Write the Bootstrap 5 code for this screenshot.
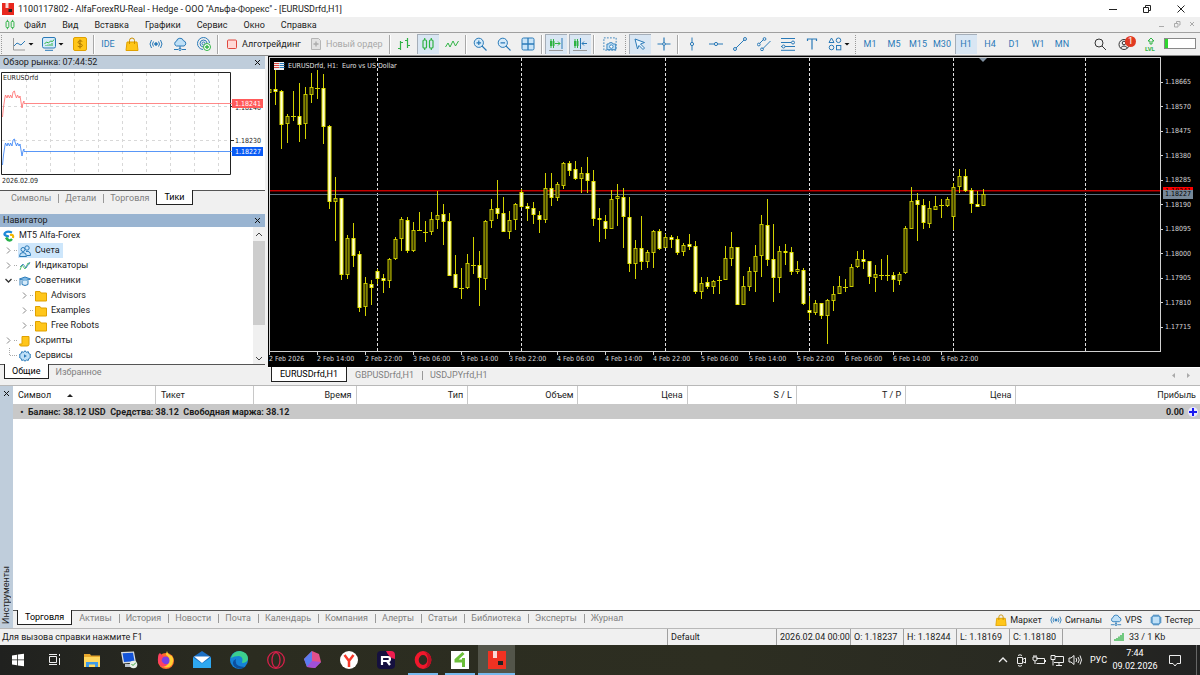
<!DOCTYPE html>
<html lang="ru">
<head>
<meta charset="utf-8">
<meta name="viewport" content="width=device-width, initial-scale=1">
<title>AlfaForexRU-Real - [EURUSDrfd,H1]</title>
<link href="https://cdn.jsdelivr.net/npm/bootstrap@5.3.0/dist/css/bootstrap.min.css" rel="stylesheet">
<script src="https://cdn.jsdelivr.net/npm/bootstrap@5.3.0/dist/js/bootstrap.bundle.min.js"></script>
<style>
  :root { --face:#f0f0f0; --edge:#a0a0a0; --ink:#1c1c1c; --dim:#808080; --blue:#2a7ab8; }
  body { font-family: Roboto, "Noto Sans", sans-serif; font-size: 9px; line-height: 14px; color: var(--ink); background: var(--face); }
  button { font: inherit; color: inherit; background: none; border: 0; padding: 0; }
  a { color: inherit; text-decoration: none; }
  svg { display: block; flex: none; }
  .ic { width: 14px; height: 14px; fill: none; stroke: var(--blue); stroke-width: 1; }
  .tight { font-family: "DejaVu Sans Condensed", sans-serif; font-size: 7px; line-height: 10px; }

  .titlebar { height: 17px; background: #fff; padding: 0 2px; }
  .titlebar .winbtn { width: 34px; height: 17px; }
  .winbtn svg { margin: auto; }
  .menubar { height: 15px; padding-left: 4px; }
  .menubar .menu-list { gap: 16px; padding-left: 8px; }

  .toolbar { height: 24px; border-top: 1px solid var(--edge); border-bottom: 1px solid #8a8a8a; gap: 2px; padding-left: 1px; }
  .tool { width: 22px; height: 20px; display: flex; align-items: center; justify-content: center; flex: none; color: var(--blue); }
  .tool.drop { width: 28px; gap: 2px; }
  .tool.wide { width: 26px; }
  .tool.on { background: #d9e6f3; box-shadow: inset 1px 1px 0 #a5aeb8; }
  .tool.labelled { width: auto; padding: 0 4px; gap: 3px; color: var(--ink); }
  .tool.labelled.algo { width: 84px; }
  .tool.labelled.order { width: 80px; color: #a8a8a8; justify-content: flex-start; padding: 0 2px; }
  .caret { width: 6px; height: 3px; background: #111; clip-path: polygon(0 0,100% 0,50% 100%); flex: none; }
  .sep { width: 2px; height: 19px; border-left: 1px solid #a8a8a8; border-right: 1px solid #fff; flex: none; }
  .grip { width: 2px; height: 19px; border-left: 1px dotted #999; flex: none; }
  .count { top: 2px; right: 0; min-width: 11px; height: 11px; line-height: 11px; border-radius: 6px; background: #e13a22; color: #fff; text-align: center; }

  .side { width: 265px; margin-right: 3px; }
  .panehead { height: 13px; line-height: 13px; padding: 0 4px 0 3px; background: #bfcddb; }
  .panehead.active { background: #99b4d1; }
  .panebody { background: #fff; border-bottom: 1px solid #555; }
  .tickpane { padding: 3px 0; }
  .tickdate { padding: 1px 2px; }
  .tabstrip { height: 15px; color: var(--dim); }
  .tabstrip button { padding: 0 7px; height: 14px; line-height: 13px; position: relative; }
  .tabstrip button + button::before { content: ""; position: absolute; left: 0; top: 3px; height: 9px; border-left: 1px solid #999; }
  .tabstrip .cur { background: #fff; color: #000; border: 1px solid #222; border-top: 0; height: 15px; margin-top: -1px; z-index: 1; line-height: 15px; }
  .tabstrip .cur + button::before, .tabstrip button.cur::before { display: none; }
  .charttabs { border-top: 1px solid #fff; padding-left: 3px; }
  .charttabs button { padding: 0 8px; line-height: 15px; }
  .chartcol { padding-bottom: 3px; }

  .tree { list-style: none; margin: 0; padding: 1px 0 1px 3px; }
  .tree li > div { height: 15px; line-height: 15px; display: flex; align-items: center; gap: 4px; }
  .tree ul { list-style: none; margin: 0; padding: 0 0 0 16px; }
  .tree .ic { width: 12px; height: 12px; }
  .tree .twist { width: 11px; height: 15px; stroke: #888; fill: none; }
  .tree .lab { display: flex; align-items: center; gap: 4px; padding: 0 3px 0 1px; margin-left: 1px; height: 15px; }
  .tree .lab.sel { background: #cde6fb; }
  .tree li > .branch { gap: 0; }
  .tree .dash { width: 3px; border-top: 1px dotted #aaa; }
  .scroller { width: 12px; background: var(--face); }
  .thumb { height: 84px; background: #cdcdcd; }

  .chartframe { background: #000; color: #d8d8d8; padding: 1px 0 0 1px; }
  .plot { border: 1px solid #d0d0d0; overflow: hidden; }
  .prices { width: 39px; padding: 20px 0 20px 0; }
  .prices span { display: flex; align-items: center; height: 10px; gap: 2px; }
  .prices span::before { content: ""; width: 2px; border-top: 1px solid #d0d0d0; }
  .quote { left: 2px; width: 30px; height: 9px; line-height: 9px; padding-left: 2px; color: #000; }
  .times { height: 15px; overflow: hidden; }
  .times span { flex: 0 0 48px; white-space: nowrap; line-height: 14px; position: relative; }
  .times span::before { content: ""; position: absolute; left: 0; top: 0; height: 3px; border-left: 1px solid #d0d0d0; }
  .candles .w { fill: #d2d200; }
  .candles .h { fill: #3a3a00; stroke: #c8c800; }
  .candles .f { fill: #ffffd8; stroke: #e8e800; }

  .toolbox { border-top: 1px solid #b8b8b8; }
  .toolstrip { width: 13px; background: #bfcddb; padding: 4px 0; }
  .upright { writing-mode: vertical-rl; transform: rotate(180deg); line-height: 13px; }
  .trades { table-layout: fixed; margin: 0; color: var(--ink); --bs-table-bg: transparent; }
  .trades th, .trades td { padding: 0 4px 0 5px; font-weight: 400; border-bottom: 0; white-space: nowrap; }
  .trades th { height: 18px; border-right: 1px solid #c8c8c8; text-align: right; vertical-align: middle; }
  .trades th:last-child { border-right: 0; }
  .trades td { height: 15px; background: #c8c8c8; font-weight: 700; vertical-align: middle; }
  .trades td:last-child { padding-right: 2px; }
  .plus { width: 10px; height: 10px; border-radius: 5px; background: #e8e8ff; }
  .boxtabs { height: 17px; }
  .services { gap: 8px; padding-right: 7px; }
  .services button { display: flex; align-items: center; gap: 3px; }
  .services .ic { width: 12px; height: 12px; }

  .statusbar { height: 17px; border-top: 1px solid #b8b8b8; line-height: 16px; padding-left: 2px; }
  .statusbar .cell { border-left: 1px solid #a0a0a0; padding-left: 3px; flex: none; white-space: nowrap; }
  .c-profile { width: 109px; } .c-date { width: 74px; } .c-price { width: 53px; } .c-none { width: 48px; } .c-net { width: 90px; }

  .taskbar { height: 30px; background: linear-gradient(90deg,#20211f,#2b2c20 20%,#2d2e21 60%,#292a22 85%,#222); color: #fff; }
  .apps { width: 515px; }
  .apps button { flex: 1 1 0; display: flex; align-items: center; justify-content: center; border-bottom: 2px solid transparent; border-top: 2px solid transparent; }
  .apps svg { width: 20px; height: 20px; }
  .apps .run { background: linear-gradient(#76b9ed,#76b9ed) center bottom/30px 2px no-repeat border-box; }
  .apps .front { border-bottom-color: #76b9ed; background: #53554a; }
  .tray { gap: 4px; }
  .tray .ic { stroke: #eee; }
  .clock { width: 48px; line-height: 13px; text-align: center; }
  .bell { margin: 0 10px 0 5px; }
  .peek { width: 4px; height: 30px; border-left: 1px solid #666; }
</style>
</head>
<body class="d-flex flex-column min-vh-100">

<svg width="0" height="0" class="position-absolute" aria-hidden="true">
  <symbol id="i-line" viewBox="0 0 14 14"><path d="M1.500 1v12H13" stroke="#999"/><path d="M2 9l3-3 4 2 4-4"/></symbol>
  <symbol id="i-ind" viewBox="0 0 14 14"><rect x=".5" y=".5" width="13" height="10.500" rx="1.500" fill="#d6ebfa"/><path d="M2.500 7l2-2 2 1 2-2 2 .5 1.500-2" stroke="#2fb344"/><path d="M4 9v-1M6 9V7.500M8 9V7M10 9V6" stroke="#2fb344"/><path d="M3 13.300h8"/></symbol>
  <symbol id="i-usd" viewBox="0 0 14 14"><rect x=".5" y=".5" width="13" height="13" rx="1.500" fill="#ffc61a" stroke="#e0a100"/><path d="M9.300 4.500c-1-1-4.300-1-4.300.8 0 2 4.300 1 4.300 3.200 0 1.700-3.500 1.700-4.600.6M7 2.500v9" stroke="#a87400"/></symbol>
  <symbol id="i-bag" viewBox="0 0 14 14"><path d="M2 5h10l1 8.500H1z" fill="#ffc61a" stroke="#e0a100"/><path d="M4.500 7V3.500a2.500 2.500 0 0 1 5 0V7" stroke="#c98f00"/></symbol>
  <symbol id="i-sig" viewBox="0 0 14 14"><circle cx="7" cy="7" r="1.300" fill="#2a7ab8"/><path d="M4.500 4.500q-2 2.500 0 5M9.500 4.500q2 2.500 0 5M2.500 3q-3 4 0 8M11.500 3q3 4 0 8"/></symbol>
  <symbol id="i-cloud" viewBox="0 0 14 14"><path d="M3.500 9a2.500 2.500 0 0 1 0-4.800 3.600 3.600 0 0 1 7-.4A2.700 2.700 0 0 1 11 9z" fill="#bfe0f7"/><path d="M7 9v3M1 12.500h4M9 12.500h4"/><circle cx="7" cy="12.300" r="1.200"/></symbol>
  <symbol id="i-vps" viewBox="0 0 14 14"><path d="M12.500 6A6 6 0 1 0 6 12.500M10 6a3.500 3.500 0 1 0-4 4"/><circle cx="6.500" cy="6.500" r="1.500"/><circle cx="10" cy="10" r="3.500" fill="#fff" stroke="#2fb344"/><path d="M10 8v4M8 10h4" stroke="#2fb344" stroke-width="1.300"/></symbol>
  <symbol id="i-stop" viewBox="0 0 14 14"><rect x="2.500" y="3" width="9" height="8.500" rx="1" fill="#ffd9d6" stroke="#e0483e"/></symbol>
  <symbol id="i-order" viewBox="0 0 14 14"><path d="M2.500 1.500h7l2 2v9h-9z" stroke="#b5b5b5" fill="#e2e2e2"/><path d="M7 4.500v5M4.500 7h5" stroke="#aaa" stroke-width="1.300"/></symbol>
  <symbol id="i-bars" viewBox="0 0 14 14"><path d="M3.500 4v9M1 11.500h2.500M3.500 5.500H6M10.500 1v10M8 3.500h2.500M10.500 8.500H13" stroke="#2fb344" stroke-width="1.200"/></symbol>
  <symbol id="i-candle" viewBox="0 0 14 14"><g stroke="#2fb344" stroke-width="1.200"><rect x="2" y="3" width="3.500" height="8" rx="1"/><rect x="8.500" y="3" width="3.500" height="8" rx="1"/><path d="M3.700 1v2M3.700 11v2M10.300 1v2M10.300 11v2"/></g></symbol>
  <symbol id="i-wave" viewBox="0 0 14 14"><path d="M.5 10l2.500-4 2 4 3-6 2.500 5 3-5" stroke="#2fb344"/></symbol>
  <symbol id="i-zin" viewBox="0 0 14 14"><circle cx="5.800" cy="5.800" r="4.600" fill="#d6ebfa"/><path d="M9 9l4.500 4.500M5.800 3.500v4.600M3.500 5.800h4.600" stroke-width="1.200"/></symbol>
  <symbol id="i-zout" viewBox="0 0 14 14"><circle cx="5.800" cy="5.800" r="4.600" fill="#d6ebfa"/><path d="M9 9l4.500 4.500M3.500 5.800h4.600" stroke-width="1.200"/></symbol>
  <symbol id="i-grid" viewBox="0 0 14 14"><rect x="1" y="1" width="12" height="12" rx="1.500" fill="#c8e4f8"/><path d="M7 1v12M1 7h12" stroke-width="1.300"/></symbol>
  <symbol id="i-scroll" viewBox="0 0 14 14"><path d="M2 4v5M4.500 4v5" stroke="#2fb344" stroke-width="2"/><path d="M2 2v9M4.500 2v9M6 6.500h5M9 4.500l2 2-2 2" stroke="#2fb344"/><path d="M13 1v11"/><path d="M0 13.500h14" stroke="#999"/></symbol>
  <symbol id="i-shift" viewBox="0 0 14 14"><path d="M2 4v5M4.500 4v5" stroke="#2fb344" stroke-width="2"/><path d="M2 2v9M4.500 2v9" stroke="#2fb344"/><path d="M7.500 1v11M9 6.500h5M11 4.500l-2 2 2 2"/><path d="M0 13.500h14" stroke="#999"/></symbol>
  <symbol id="i-cam" viewBox="0 0 16 16"><rect x="1" y="1" width="14" height="14" stroke-dasharray="2 1.500"/><path d="M4.500 8h2l1-1.500h3L11.500 8h3v6.500h-10z" fill="#bfe0f7"/><circle cx="9.500" cy="11" r="2" fill="#fff"/></symbol>
  <symbol id="i-cur" viewBox="0 0 14 14"><path d="M2 2l9.500 3.500-4 1.500 4 4-1.500 1.500-4-4-1.500 3.500z" fill="#e9f4fd"/></symbol>
  <symbol id="i-cross" viewBox="0 0 14 14"><path d="M7 .5v5M7 8.500v5M.5 7h5M8.500 7h5" stroke-width="1.200"/><circle cx="7" cy="7" r="1.400"/></symbol>
  <symbol id="i-v" viewBox="0 0 14 14"><path d="M7 .5v5M7 8.500v5"/><circle cx="7" cy="7" r="1.600"/></symbol>
  <symbol id="i-h" viewBox="0 0 14 14"><path d="M0 7h5.500M8.500 7H14"/><circle cx="7" cy="7" r="1.600"/></symbol>
  <symbol id="i-trend" viewBox="0 0 14 14"><path d="M3 11l8-8"/><circle cx="2" cy="12" r="1.500"/><circle cx="12" cy="2" r="1.500"/></symbol>
  <symbol id="i-chan" viewBox="0 0 14 14"><path d="M2.500 6.500l4-4M5.500 12l8-8"/><circle cx="7.500" cy="2" r="1.400"/><circle cx="1.800" cy="7.500" r="1.400"/><circle cx="5" cy="12.300" r="1.400"/></symbol>
  <symbol id="i-fib" viewBox="0 0 14 14"><path d="M0 1.500h14M0 5.500h10M4 9.500h10M0 13.300h14M0 9.500h1"/><circle cx="12" cy="5.500" r="1.500"/><circle cx="2.500" cy="9.500" r="1.500"/></symbol>
  <symbol id="i-t" viewBox="0 0 14 14"><path d="M2.500 4V2h9v2M7 2v10.500" stroke-width="1.200"/></symbol>
  <symbol id="i-shapes" viewBox="0 0 14 14"><path d="M3.500 1L6 5.500H1z"/><circle cx="10.500" cy="3.300" r="2.300"/><circle cx="3.500" cy="10.500" r="2.300"/><rect x="8.500" y="8.500" width="4.300" height="4.300"/></symbol>
  <symbol id="i-find" viewBox="0 0 14 14"><g stroke="#333"><circle cx="7" cy="6" r="4"/><path d="M10 9l4 4"/></g></symbol>
  <symbol id="i-user" viewBox="0 0 14 14"><g stroke="#333"><circle cx="6" cy="7.500" r="5"/><circle cx="6" cy="6" r="1.800"/><path d="M2.500 11q3.500-4 7 0"/></g></symbol>
  <symbol id="i-twist" viewBox="0 0 11 15"><path d="M4 4.500l3 3-3 3"/></symbol>
  <symbol id="i-open" viewBox="0 0 11 15"><path d="M2.500 6l3 3 3-3" stroke="#333" stroke-width="1.300"/></symbol>
  <symbol id="i-folder" viewBox="0 0 12 12"><path d="M.5 1.500h4.500l1 1.500h5.500v8H.5z" fill="#ffc61a" stroke="#e0a100"/></symbol>
  <symbol id="i-people" viewBox="0 0 12 12"><circle cx="4" cy="4.500" r="2"/><path d="M.5 11.500q0-4 3.500-4t3.500 4z" fill="#bfe0f7"/><circle cx="8" cy="3" r="2.200"/><path d="M7 6.500q4.500-1 4.500 4H8"/></symbol>
  <symbol id="i-indic" viewBox="0 0 12 12"><path d="M1 10l2-5 3 4 3-6 2 1" stroke="#2fb344" stroke-width=".8"/><path d="M1 7l3-3 3 4 4-6" stroke-width=".8"/></symbol>
  <symbol id="i-hat" viewBox="0 0 12 12"><path d="M.5 4L6 2l5.500 2L6 6z" fill="#7db9e6"/><path d="M3 5.500v4q3 2 6 0v-4" fill="#d6ebfa"/><path d="M1 4.500v6"/></symbol>
  <symbol id="i-script" viewBox="0 0 12 12"><path d="M3 1.500h7v8q0 1.500-2 1.500H2q-1.500 0-1.500-2H3z" fill="#ffc61a" stroke="#e0a100"/></symbol>
  <symbol id="i-gear" viewBox="0 0 12 12"><path d="M6 .7l1.300 1.600 2-.6.6 2 1.700.8L11 6l.6 1.500-1.700.9-.6 2-2-.5L6 11.300 4.700 9.900l-2 .5-.6-2L.4 7.500 1 6 .4 4.500l1.700-.8.6-2 2 .6z" fill="#bfe0f7"/><path d="M5 4.200v3.600l2.800-1.800z" fill="#2a7ab8" stroke="none"/></symbol>
  <symbol id="i-chip" viewBox="0 0 12 12"><path d="M4 .5v11M6 .5v11M8 .5v11M.5 4h11M.5 6h11M.5 8h11"/><rect x="2" y="2" width="8" height="8" rx="1" fill="#bfe0f7"/></symbol>
</svg>

<header>
  <div class="titlebar d-flex align-items-center">
    <svg width="12" height="12" viewBox="0 0 12 12"><path fill="#e8281e" d="M0 0h12v12H0z"/><path fill="#fbd9d6" d="M3.500 0h3v5h-3z"/><path fill="#222" d="M6.500 6h3.500v3H6.500z"/></svg>
    <span class="ms-1 flex-grow-1 text-nowrap">1100117802 - AlfaForexRU-Real - Hedge - ООО ''Альфа-Форекс'' - [EURUSDrfd,H1]</span>
    <button class="winbtn" aria-label="Свернуть"><svg width="8" height="8"><path d="M0 4.500h8" stroke="#222"/></svg></button>
    <button class="winbtn" aria-label="Восстановить"><svg width="8" height="8" fill="none" stroke="#222"><path d="M.5 2.500h5v5h-5zM2.500 2V.5h5v5H6"/></svg></button>
    <button class="winbtn" aria-label="Закрыть"><svg width="8" height="8"><path d="M.5.5l7 7M7.500.5l-7 7" stroke="#222"/></svg></button>
  </div>
  <nav class="menubar d-flex align-items-center">
    <svg width="12" height="11" viewBox="0 0 14 14" fill="none"><use href="#i-candle"/></svg>
    <div class="menu-list d-flex flex-grow-1">
      <a href="#">Файл</a><a href="#">Вид</a><a href="#">Вставка</a><a href="#">Графики</a><a href="#">Сервис</a><a href="#">Окно</a><a href="#">Справка</a>
    </div>
    <div class="d-flex gap-2 pe-1" aria-hidden="true">
      <svg width="7" height="7"><path d="M0 5.500h5" stroke="#aaa"/></svg>
      <svg width="7" height="7" fill="none" stroke="#aaa"><path d="M.5 2.500h3.500v3.500H.500zM2.500 2V.5h3.500v3.500H5"/></svg>
      <svg width="7" height="7"><path d="M1 1l4 4M5 1L1 5" stroke="#aaa"/></svg>
    </div>
  </nav>
  <div class="toolbar d-flex align-items-center">
    <span class="grip"></span>
    <button class="tool drop ms-1" aria-label="Линия"><svg class="ic"><use href="#i-line"/></svg><i class="caret"></i></button>
    <button class="tool drop" aria-label="Индикаторы"><svg class="ic"><use href="#i-ind"/></svg><i class="caret"></i></button>
    <button class="tool" aria-label="Символы"><svg class="ic"><use href="#i-usd"/></svg></button>
    <span class="sep"></span>
    <button class="tool">IDE</button>
    <button class="tool" aria-label="Маркет"><svg class="ic"><use href="#i-bag"/></svg></button>
    <button class="tool" aria-label="Сигналы"><svg class="ic"><use href="#i-sig"/></svg></button>
    <button class="tool" aria-label="Облако"><svg class="ic"><use href="#i-cloud"/></svg></button>
    <button class="tool" aria-label="VPS"><svg class="ic"><use href="#i-vps"/></svg></button>
    <span class="sep"></span>
    <button class="tool labelled algo"><svg class="ic"><use href="#i-stop"/></svg>Алготрейдинг</button>
    <button class="tool labelled order"><svg class="ic"><use href="#i-order"/></svg>Новый ордер</button>
    <span class="sep"></span>
    <button class="tool" aria-label="Бары"><svg class="ic"><use href="#i-bars"/></svg></button>
    <button class="tool on" aria-label="Свечи"><svg class="ic"><use href="#i-candle"/></svg></button>
    <button class="tool" aria-label="Линия"><svg class="ic"><use href="#i-wave"/></svg></button>
    <span class="sep"></span>
    <button class="tool" aria-label="Увеличить"><svg class="ic"><use href="#i-zin"/></svg></button>
    <button class="tool" aria-label="Уменьшить"><svg class="ic"><use href="#i-zout"/></svg></button>
    <button class="tool" aria-label="Окна"><svg class="ic"><use href="#i-grid"/></svg></button>
    <span class="sep"></span>
    <button class="tool on" aria-label="Автопрокрутка"><svg class="ic"><use href="#i-scroll"/></svg></button>
    <button class="tool on" aria-label="Сдвиг"><svg class="ic"><use href="#i-shift"/></svg></button>
    <span class="sep"></span>
    <button class="tool wide" aria-label="Снимок"><svg class="ic"><use href="#i-cam"/></svg></button>
    <span class="grip"></span>
    <button class="tool on" aria-label="Курсор"><svg class="ic"><use href="#i-cur"/></svg></button>
    <button class="tool" aria-label="Перекрестие"><svg class="ic"><use href="#i-cross"/></svg></button>
    <span class="sep"></span>
    <button class="tool" aria-label="Вертикаль"><svg class="ic"><use href="#i-v"/></svg></button>
    <button class="tool" aria-label="Горизонталь"><svg class="ic"><use href="#i-h"/></svg></button>
    <button class="tool" aria-label="Тренд"><svg class="ic"><use href="#i-trend"/></svg></button>
    <button class="tool" aria-label="Канал"><svg class="ic"><use href="#i-chan"/></svg></button>
    <button class="tool" aria-label="Фибоначчи"><svg class="ic"><use href="#i-fib"/></svg></button>
    <button class="tool" aria-label="Текст"><svg class="ic"><use href="#i-t"/></svg></button>
    <button class="tool drop" aria-label="Фигуры"><svg class="ic"><use href="#i-shapes"/></svg><i class="caret"></i></button>
    <span class="grip"></span>
    <button class="tool">M1</button><button class="tool">M5</button><button class="tool">M15</button><button class="tool">M30</button><button class="tool on">H1</button><button class="tool">H4</button><button class="tool">D1</button><button class="tool">W1</button><button class="tool">MN</button>
    <div class="d-flex align-items-center ms-auto gap-1 pe-1">
      <button class="tool" aria-label="Поиск"><svg class="ic"><use href="#i-find"/></svg></button>
      <button class="tool position-relative" aria-label="Профиль"><svg class="ic"><use href="#i-user"/></svg><span class="count position-absolute">1</span></button>
      <svg width="20" height="14"><path d="M11 1l3 3h-2v3h-2V4H8z" fill="none" stroke="#2fb344"/><text x="5" y="14" font-size="6" font-weight="700" fill="#2fb344">LVL</text></svg>
      <svg width="32" height="12"><rect x=".5" y=".5" width="31" height="10" fill="#fff" stroke="#888"/><path d="M1 1h3v9H1z" fill="#2fd52f"/></svg>
    </div>
  </div>
</header>

<main class="d-flex flex-column flex-grow-1">
  <div class="d-flex">
    <aside class="side flex-shrink-0">
      <section>
        <div class="panehead d-flex"><span class="flex-grow-1">Обзор рынка: 07:44:52</span><button aria-label="Закрыть"><svg width="7" height="7"><path d="M1 1l5 5M6 1L1 6" stroke="#111"/></svg></button></div>
        <div class="panebody tickpane tight">
          <svg width="265" height="103" fill="none">
            <g stroke="#d8d8d8" stroke-dasharray="3 3" id="tickgrid"><path d="M2 34.500h228M2 68.500h228"/></g>
            <path d="M1.500.5h229v102h-229z" stroke="#222"/>
            <text x="3" y="8" fill="#222">EURUSDrfd</text>
            <g stroke-width=".8">
              <path d="M2.500 45l1-10 1.500-10 .5-2 1.500 3 1-3 1.500 3 1-3 1.500 3 1-6 1.500-1 .5 3 1.500 4 1-3 1.500 3 1-2 1 6 1 6 1-5 1-2V31.500h208" stroke="#ff6a6a"/>
              <path d="M2.500 93l1-10 1.500-10 .5-2 1.500 3 1-3 1.500 3 1-3 1.500 3 1-6 1.500-1 .5 3 1.500 4 1-3 1.500 3 1-2 1 6 1 6 1-5 1-2V79.500h208" stroke="#2f7cf5"/>
            </g>
            <path d="M231 34.500h3M231 68.500h3" stroke="#222"/>
            <text x="235" y="38" fill="#222">1.18240</text><text x="235" y="71" fill="#222">1.18230</text>
            <rect x="232" y="27" width="31" height="9" fill="#ff5a5a"/><text x="235" y="34" fill="#fff">1.18241</text>
            <rect x="232" y="75" width="31" height="9" fill="#0a5cf5"/><text x="235" y="82" fill="#fff">1.18227</text>
          </svg>
          <div class="tickdate">2026.02.09</div>
        </div>
        <div class="tabstrip d-flex ps-1"><button>Символы</button><button>Детали</button><button>Торговля</button><button class="cur">Тики</button></div>
      </section>
      <section class="mt-2">
        <div class="panehead active d-flex"><span class="flex-grow-1">Навигатор</span><button aria-label="Закрыть"><svg width="7" height="7"><path d="M1 1l5 5M6 1L1 6" stroke="#111"/></svg></button></div>
        <div class="panebody d-flex">
          <ul class="tree flex-grow-1">
            <li><div><svg class="ic" viewBox="0 0 12 12"><path d="M9 2.500Q4 .500 2 3t4 3.500" stroke="#1e88d8" stroke-width="2.200"/><path d="M3 7.500q3 5 6 1.500" stroke="#28b04a" stroke-width="2.500"/><path d="M7 5q4-1 3 3" stroke="#f2b600" stroke-width="2.200"/></svg>MT5 Alfa-Forex</div></li>
            <li><div class="branch"><svg class="twist"><use href="#i-twist"/></svg><i class="dash"></i><span class="lab sel"><svg class="ic"><use href="#i-people"/></svg>Счета</span></div></li>
            <li><div class="branch"><svg class="twist"><use href="#i-twist"/></svg><i class="dash"></i><span class="lab"><svg class="ic"><use href="#i-indic"/></svg>Индикаторы</span></div></li>
            <li><div class="branch"><svg class="twist"><use href="#i-open"/></svg><i class="dash"></i><span class="lab"><svg class="ic"><use href="#i-hat"/></svg>Советники</span></div>
              <ul>
                <li><div class="branch"><svg class="twist"><use href="#i-twist"/></svg><i class="dash"></i><span class="lab"><svg class="ic"><use href="#i-folder"/></svg>Advisors</span></div></li>
                <li><div class="branch"><svg class="twist"><use href="#i-twist"/></svg><i class="dash"></i><span class="lab"><svg class="ic"><use href="#i-folder"/></svg>Examples</span></div></li>
                <li><div class="branch"><svg class="twist"><use href="#i-twist"/></svg><i class="dash"></i><span class="lab"><svg class="ic"><use href="#i-folder"/></svg>Free Robots</span></div></li>
              </ul></li>
            <li><div class="branch"><svg class="twist"><use href="#i-twist"/></svg><i class="dash"></i><span class="lab"><svg class="ic"><use href="#i-script"/></svg>Скрипты</span></div></li>
            <li><div class="branch"><svg class="twist"><path d="M6.500 0v7.500H11" stroke="#aaa" stroke-dasharray="1 1"/></svg><i class="dash"></i><span class="lab"><svg class="ic"><use href="#i-gear"/></svg>Сервисы</span></div></li>
          </ul>
          <div class="scroller d-flex flex-column" aria-hidden="true">
            <svg width="12" height="14"><path d="M3 9l3-3 3 3" fill="none" stroke="#444"/></svg>
            <div class="thumb"></div>
            <svg class="mt-auto" width="12" height="12"><path d="M3 5l3 3 3-3" fill="none" stroke="#444"/></svg>
          </div>
        </div>
        <div class="tabstrip d-flex ps-1"><button class="cur">Общие</button><button>Избранное</button></div>
      </section>
    </aside>

    <section class="flex-grow-1 overflow-hidden chartcol">
      <div class="chartframe tight">
        <div class="d-flex">
          <div class="plot flex-grow-1">
            <svg width="100%" height="293" id="chart"></svg>
          </div>
          <div class="prices d-flex flex-column justify-content-between position-relative" id="prices"></div>
        </div>
        <div class="times d-flex" id="times"></div>
      </div>
      <div class="tabstrip charttabs d-flex align-items-start">
        <button class="cur">EURUSDrfd,H1</button><button>GBPUSDrfd,H1</button><button>USDJPYrfd,H1</button>
        <svg class="ms-auto me-2 mt-1" width="22" height="8"><path d="M5 1v5L2 3.500zM17 1v5l3-2.500z" fill="#aaa"/></svg>
      </div>
    </section>
  </div>

  <section class="toolbox d-flex flex-grow-1">
    <div class="toolstrip d-flex flex-column align-items-center justify-content-between">
      <button aria-label="Закрыть"><svg width="7" height="7"><path d="M1 1l5 5M6 1L1 6" stroke="#111"/></svg></button>
      <span class="upright">Инструменты</span>
    </div>
    <div class="d-flex flex-column flex-grow-1">
      <div class="panebody flex-grow-1">
        <table class="table trades">
          <colgroup><col style="width:12%"><col style="width:8.300%"><col style="width:8.600%"><col style="width:9.400%"><col style="width:9.300%"><col style="width:9.200%"><col style="width:9.200%"><col style="width:9.200%"><col style="width:9.300%"><col></colgroup>
          <thead><tr>
            <th class="text-start"><span class="d-flex align-items-center gap-3">Символ<svg width="6" height="3"><path d="M3 0l3 3H0z" fill="#222"/></svg></span></th>
            <th class="text-start">Тикет</th><th>Время</th><th>Тип</th><th>Объем</th><th>Цена</th><th>S / L</th><th>T / P</th><th>Цена</th><th>Прибыль</th>
          </tr></thead>
          <tbody><tr><td colspan="9">&nbsp;•&nbsp; Баланс: 38.12 USD&nbsp; Средства: 38.12&nbsp; Свободная маржа: 38.12</td>
            <td><div class="d-flex align-items-center justify-content-end gap-1">0.00<button class="plus" aria-label="Добавить"><svg width="10" height="10"><path d="M5 1v8M1 5h8" stroke="#1a1af0" stroke-width="2"/></svg></button></div></td></tr></tbody>
        </table>
      </div>
      <div class="d-flex justify-content-between boxtabs">
        <div class="tabstrip d-flex ps-1">
          <button class="cur">Торговля</button><button>Активы</button><button>История</button><button>Новости</button><button>Почта</button><button>Календарь</button><button>Компания</button><button>Алерты</button><button>Статьи</button><button>Библиотека</button><button>Эксперты</button><button>Журнал</button>
        </div>
        <div class="services d-flex align-items-center">
          <button><svg class="ic"><use href="#i-bag"/></svg>Маркет</button>
          <button><svg class="ic"><use href="#i-sig"/></svg>Сигналы</button>
          <button><svg class="ic"><use href="#i-cloud"/></svg>VPS</button>
          <button><svg class="ic"><use href="#i-chip"/></svg>Тестер</button>
        </div>
      </div>
    </div>
  </section>
</main>

<footer>
  <div class="statusbar d-flex">
    <span class="flex-grow-1">Для вызова справки нажмите F1</span>
    <span class="cell c-profile">Default</span><span class="cell c-date">2026.02.04 00:00</span>
    <span class="cell c-price">O: 1.18237</span><span class="cell c-price">H: 1.18244</span><span class="cell c-price">L: 1.18169</span><span class="cell c-price">C: 1.18180</span>
    <span class="cell c-none"></span>
    <span class="cell c-net d-flex align-items-center gap-1"><svg width="11" height="8"><path d="M1 8V6M3 8V5M5 8V3.500M7 8V2M9 8V0" stroke="#2fb344" stroke-width="1.300"/></svg>33 / 1 Kb</span>
  </div>
  <div class="taskbar d-flex">
    <div class="apps d-flex">
      <button aria-label="Пуск"><svg viewBox="0 0 20 20"><path fill="#fff" d="M4 5.500l5-.8V9.500H4zM9.800 4.600L16 3.700v5.800H9.800zM4 10.300h5v4.900l-5-.8zM9.800 10.300H16v6l-6.200-.9z"/></svg></button>
      <button aria-label="Представление задач"><svg viewBox="0 0 20 20" fill="none" stroke="#eee"><path d="M4.500 6.500h7v6h-7zM4 4.500h8M4 14.500h8M14.500 4v2M14.500 8v7"/></svg></button>
      <button aria-label="Проводник"><svg viewBox="0 0 20 20"><path fill="#e8a72c" d="M2 4h6l1 1.500h9V9H2z"/><path fill="#ffd75e" d="M2 7h16v10H2z"/><path fill="#3f9be8" d="M4 17v-5h12v5h-3v-2.500H7V17z"/></svg></button>
      <button aria-label="Удалённый стол"><svg viewBox="0 0 20 20"><path fill="#d8dde2" d="M2 2l13-.5 2 11-13 1z"/><path fill="#1454d8" d="M3.500 3.200l10.500-.4 1.500 8.500-10.500.8z"/><path fill="#b8c0c8" d="M6 14h6v3H6z"/><circle cx="14.500" cy="14.500" r="3.800" fill="#e8efe8"/><path d="M12.500 14l1.500 1.500 3-3" stroke="#3aa640" fill="none"/></svg></button>
      <button aria-label="Firefox"><svg viewBox="0 0 20 20"><circle cx="10" cy="11" r="8" fill="#ff6a2b"/><path fill="#ffcf33" d="M11 1q1 4 5 5 3 5-1 10-5 3-9 0 6 0 7-5 0-5-3-6 0-2 1-4z"/><circle cx="9.500" cy="10.500" r="4" fill="#7b3fe4"/><path fill="#ff4060" d="M2 8Q2 4 4 3q1 2 4 3l-3 4q2 5 7 4-3 4-7 2-4-3-3-8z"/></svg></button>
      <button aria-label="Почта"><svg viewBox="0 0 20 20"><path fill="#1b6fc4" d="M1 7l9-6 9 6v10H1z"/><path fill="#fff" d="M2 6.500h16L10 13z"/><path fill="#2ea8f0" d="M1 7.500l9 6 9-6V18H1z"/></svg></button>
      <button aria-label="Edge"><svg viewBox="0 0 20 20"><circle cx="10" cy="10" r="9" fill="#1583d8"/><path fill="#3ccf8e" d="M2 8Q4 1 11 1q8 1 8 8-1 4-6 4 2-6-3-7-5 0-8 2z"/><path fill="#0c4f9e" d="M7 9q-2 8 9 8-6 4-11-1-3-5 2-7z"/></svg></button>
      <button aria-label="Opera GX"><svg viewBox="0 0 20 20" fill="none" stroke="#d5204a" stroke-width="1.300"><circle cx="10" cy="10" r="8.300"/><ellipse cx="10" cy="10" rx="4" ry="7.500"/></svg></button>
      <button aria-label="Кристалл"><svg viewBox="0 0 20 20"><path fill="#e0508c" d="M9 1l7 3 2 8-6 6-8-1-3-8z"/><path fill="#5a7cf0" d="M9 1L1 9l3 8 5-6z"/><path fill="#a050d8" d="M4 17l5-6 9 1-6 6z"/></svg></button>
      <button aria-label="Яндекс"><svg viewBox="0 0 20 20"><circle cx="10" cy="10" r="9" fill="#fff"/><path d="M5.500 5l4.500 6 4.500-6M10 10.500V17" fill="none" stroke="#f8392a" stroke-width="2.500"/></svg></button>
      <button aria-label="Rutube"><svg viewBox="0 0 20 20"><rect x="1" y="1" width="18" height="18" rx="4" fill="#15103e"/><path fill="#f01e4f" d="M10 1h5a4 4 0 0 1 4 4v4q-6-1-9-8z"/><path d="M6 15V7h6q2 0 2 2t-2 2H6M11 11l3 4" fill="none" stroke="#fff" stroke-width="2.200"/></svg></button>
      <button class="run" aria-label="Opera"><svg viewBox="0 0 20 20"><ellipse cx="10" cy="10" rx="6.300" ry="7" fill="none" stroke="#f0182c" stroke-width="4"/><path fill="#b80f24" d="M12 2q6 1 6.500 8-.5 7-6.500 8 3-3 3-8t-3-8z"/></svg></button>
      <button class="run" aria-label="Альфа"><svg viewBox="0 0 20 20"><path fill="#fff" d="M1 1h18v18H1z"/><path d="M13.500 3L6 10v1h7.500M13.500 8v9" fill="none" stroke="#6cbf3a" stroke-width="3"/></svg></button>
      <button class="front" aria-label="MetaTrader 5"><svg viewBox="0 0 20 20"><path fill="#f03222" d="M1 1h18v18H1z"/><path fill="#fbd9d6" d="M6 1h4v7H6z"/><path fill="#222" d="M11 11h5v4h-5z"/></svg></button>
    </div>
    <div class="tray d-flex align-items-center ms-auto">
      <svg class="ic"><path d="M3 9l4-4 4 4" stroke-width="1.300"/></svg>
      <svg class="ic"><path d="M3.500 4.500h5v6h-5zM8.500 6.500l3-1.500v5l-3-1.500M4 2.500q2-1.500 4 0M4 12.500q2 1.500 4 0"/></svg>
      <svg class="ic"><path d="M4.500 5.500h8v5h-8M13.500 7v2M1 4h4v3q-2 2-4 0zM2 2v2M4 2v2M3 8v3"/></svg>
      <svg class="ic"><path d="M5 3.500h8.500v6H4M6 12.500h6M9 9.500v3M1 2.500h4v4H1zM3 6.500v6"/></svg>
      <svg class="ic"><path d="M1 5h2l3-2.500v9L3 9H1zM8 5q1.500 2 0 4M10 4q2.500 3 0 6M12 2.500q3 4.500 0 9"/></svg>
      <span class="ms-1">РУС</span>
      <div class="clock">7:44<br>09.02.2026</div>
      <button class="bell" aria-label="Уведомления"><svg width="14" height="14" fill="none" stroke="#eee"><path d="M1.500 2.500h11v8h-3.500l-2 2.500-2-2.500h-3.500z"/></svg></button>
      <span class="peek"></span>
    </div>
  </div>
</footer>

<script>
// Hourly candles: block origin in px, then type + high, body top, body bottom, low in thirds of a pixel.
// h = hollow (rising), f = filled (falling), d = no body.
const blocks = [
 [-4, `h106,106,116,116 f46,106,115,152 f108,112,212,284 h180,187,211,268 d112,187,187,202 f88,186,212,264 h98,120,211,256 h58,100,123,148 d48,102,102,134 f60,103,218,270
 f213,216,443,464 h370,432,444,560 f432,432,662,677 h543,552,662,675 f506,552,605,638 f592,600,762,773 h668,687,760,787 f678,690,701,753 f645,652,674,690 f660,672,681,716
 h613,615,681,702 h548,555,615,617 h490,496,554,590 f490,497,590,596 h504,528,591,593 d474,529,529,532 d500,533,533,563 h474,496,535,542 h410,484,499,526 f450,480,503,573
 f477,502,665,665 f602,660,703,703 d643,703,703,735 h600,627,703,705 d550,632,632,659 f590,632,672,756 h497,502,674,708 h436,466,502,522 f378,463,479,495 f428,477,533,533`],
 [72, `h242,270,307,327 h220,223,271,300 f178,186,230,235 f218,228,236,273 f217,235,255,281 f243,256,269,309 h128,175,269,280 f128,175,203,227 h156,163,203,212 h97,100,167,176
 f93,100,122,137 f92,118,148,150 h112,128,146,188 f80,129,152,190 f120,153,266,288 f235,264,270,336 f256,273,296,327 h181,207,296,298 h163,199,208,288 f174,202,262,355
 f202,262,403,425 h330,355,403,447 f258,355,395,420 h360,367,395,413 h300,304,368,415 f298,303,356,360 h313,321,353,355 f314,321,329,353 f318,328,368,375 h338,344,365,378
 f311,342,350,361 f332,348,487,491 h442,459,487,507 f442,456,471,476 h449,452,470,493 d438,450,450,491 h348,385,449,449 h306,352,386,408 f352,352,525,525`],
 [92, `h377,409,465,465 h351,362,411,423 h286,318,367,427 h195,223,317,380 f146,225,330,348 f222,328,384,455 h288,303,384,430 f281,304,309,344 f292,306,366,376 h333,357,366,371
 f355,360,462,465 f437,481,490,509 h450,459,490,494 f459,460,499,507 h446,451,499,582 h407,432,452,482 h378,409,431,432 d387,410,410,426 h343,352,411,412 h303,327,352,354
 f299,328,336,357 f332,333,381,402 h346,373,383,425 d328,376,376,389 d315,376,376,393 f367,375,391,426 h367,372,393,405 h227,235,370,373 h111,154,236,236 f129,150,166,274
 f147,164,220,236 h154,175,221,234 h138,167,179,180 d148,166,166,203 h140,147,167,172 h100,111,200,240 h56,79,112,130 f56,79,122,125 f115,120,163,189 f122,163,170,170 h116,133,168,168`]
];
let s = '', k = 0;
for (const x of [107, 251, 395, 539, 683, 815]) s += `<path d="M${x + .5} 0V293" stroke="#e0e0e0" stroke-dasharray="3 2"/>`;
s += '<rect y="132" width="100%" height="1" fill="#c80000"/><rect y="133" width="100%" height="1" fill="#5a0000"/><rect y="136" width="100%" height="1" fill="#5f7080"/><g class="candles">';
for (const [base, rows] of blocks) for (const row of rows.split(/\s+/)) {
  const [hi, top, bot, lo] = row.slice(1).split(',').map(v => Math.round(base + v / 3)), x = 6 * k++ - 1;
  if (row[0] === 'h') s += `<path class="w" d="M${x} ${hi}h1V${top}h-1zM${x} ${bot}h1V${lo}h-1z"/>`;
  else s += `<rect class="w" x="${x}" y="${hi}" width="1" height="${lo - hi}"/>`;
  s += row[0] === 'd' ? `<rect class="w" x="${x - 2}" y="${top}" width="5" height="1"/>`
    : `<rect class="${row[0]}" x="${x - 1}" y="${top + .5}" width="3" height="${Math.max(bot - top - 1, 1)}"/>`;
}
s += `</g><path d="M709 0h8l-4 4z" fill="#8090a0"/>
<g><rect x="4" y="4" width="10" height="8" fill="#eee"/><path d="M4 5.500h5M4 7.500h5M4 9.500h5" stroke="#e0483e"/><path d="M9.500 5.500h5M9.500 7.500h5M9.500 9.500h5" stroke="#2a7ab8"/></g>
<text x="18" y="10" fill="#e0e0e0" xml:space="preserve">EURUSDrfd, H1:  Euro vs US Dollar</text>`;
document.getElementById('chart').innerHTML = s;
document.getElementById('prices').innerHTML = ['1.18665','1.18570','1.18475','1.18380','1.18285','1.18190','1.18095','1.18000','1.17905','1.17810','1.17715'].map(p => `<span>${p}</span>`).join('')
  + '<div class="quote position-absolute" style="top:130px;background:#f00">1.18241</div><div class="quote position-absolute" style="top:133px;background:#778899">1.18227</div>';
document.getElementById('times').innerHTML = ['2 Feb 2026','2 Feb 14:00','2 Feb 22:00','3 Feb 06:00','3 Feb 14:00','3 Feb 22:00','4 Feb 06:00','4 Feb 14:00','4 Feb 22:00','5 Feb 06:00','5 Feb 14:00','5 Feb 22:00','6 Feb 06:00','6 Feb 14:00','6 Feb 22:00'].map(p => `<span>${p}</span>`).join('');
document.getElementById('tickgrid').innerHTML += [26,50,74,98,122,146,170,194,218].map(x => `<path d="M${x + .5} 1v101"/>`).join('');
</script>
</body>
</html>
